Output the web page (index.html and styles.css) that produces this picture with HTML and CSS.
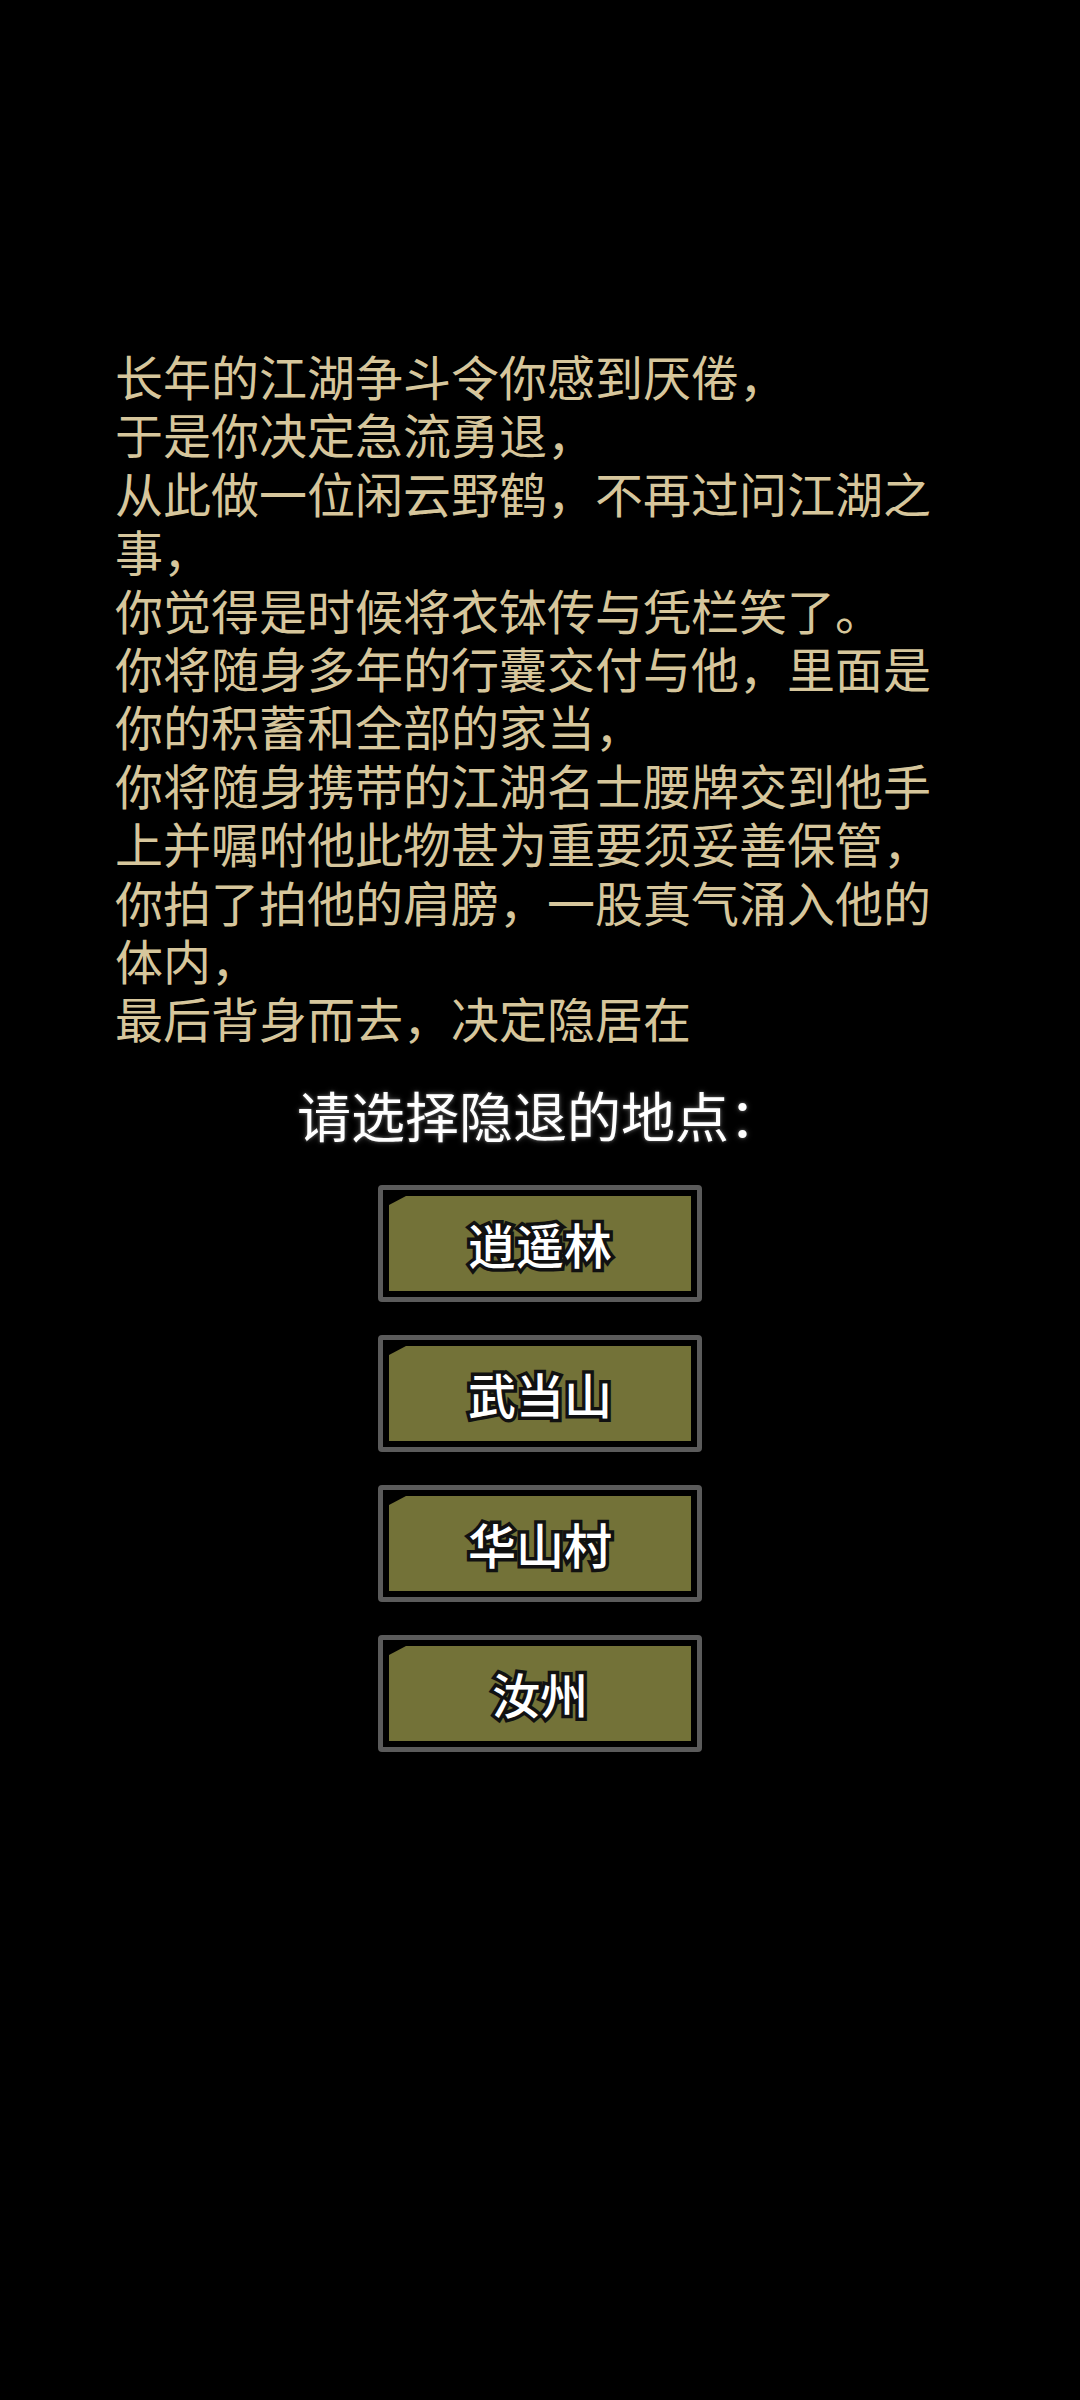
FILE: index.html
```html
<!DOCTYPE html>
<html lang="zh-CN">
<head>
    <meta charset="UTF-8">
    <meta name="viewport" content="width=device-width, initial-scale=1.0">
    <title>归隐</title>
    <link rel="stylesheet" href="styles.css">
</head>
<body>
    <div class="screen">
        <div class="story">
            <p>长年的江湖争斗令你感到厌倦，</p>
            <p>于是你决定急流勇退，</p>
            <p>从此做一位闲云野鹤，不再过问江湖之事，</p>
            <p>你觉得是时候将衣钵传与凭栏笑了。</p>
            <p>你将随身多年的行囊交付与他，里面是你的积蓄和全部的家当，</p>
            <p>你将随身携带的江湖名士腰牌交到他手上并嘱咐他此物甚为重要须妥善保管，</p>
            <p>你拍了拍他的肩膀，一股真气涌入他的体内，</p>
            <p>最后背身而去，决定隐居在</p>
        </div>

        <h2 class="prompt">请选择隐退的地点：</h2>

        <div class="choices">
            <button class="choice"><span class="choice-face">逍遥林</span></button>
            <button class="choice"><span class="choice-face">武当山</span></button>
            <button class="choice"><span class="choice-face">华山村</span></button>
            <button class="choice"><span class="choice-face">汝州</span></button>
        </div>
    </div>
</body>
</html>
```

FILE: styles.css
```css
body {
    margin: 0;
    background: #000;
    font-family: "Noto Sans CJK SC", "Noto Sans", sans-serif;
}

.screen {
    width: 1080px;
    height: 2400px;
    padding-top: 346px;
    box-sizing: border-box;
}

.story {
    margin-left: 115px;
    width: 830px;
    color: #d6c69c;
    font-size: 48px;
    line-height: 58.4px;
}

.story p {
    margin: 0;
}

.prompt {
    margin: 40px 0 0;
    text-align: center;
    color: #fff;
    font-size: 54px;
    font-weight: normal;
    line-height: 56px;
    text-shadow: 0 0 3px #666, 0 0 6px #444;
}

.choices {
    margin-top: 42px;
    display: flex;
    flex-direction: column;
    align-items: center;
    gap: 33px;
}

.choice {
    width: 324px;
    height: 117px;
    padding: 6px;
    box-sizing: border-box;
    background: #000;
    border: 5px solid #5b5b5b;
    border-radius: 4px;
    display: flex;
    font-family: inherit;
}

.choice-face {
    flex: 1;
    display: flex;
    align-items: center;
    justify-content: center;
    background: #737238;
    clip-path: polygon(17px 0, 100% 0, 100% 100%, 0 100%, 0 9px);
    color: #fff;
    font-size: 48px;
    font-weight: 500;
    -webkit-text-stroke: 7px #111;
    paint-order: stroke fill;
}
```
